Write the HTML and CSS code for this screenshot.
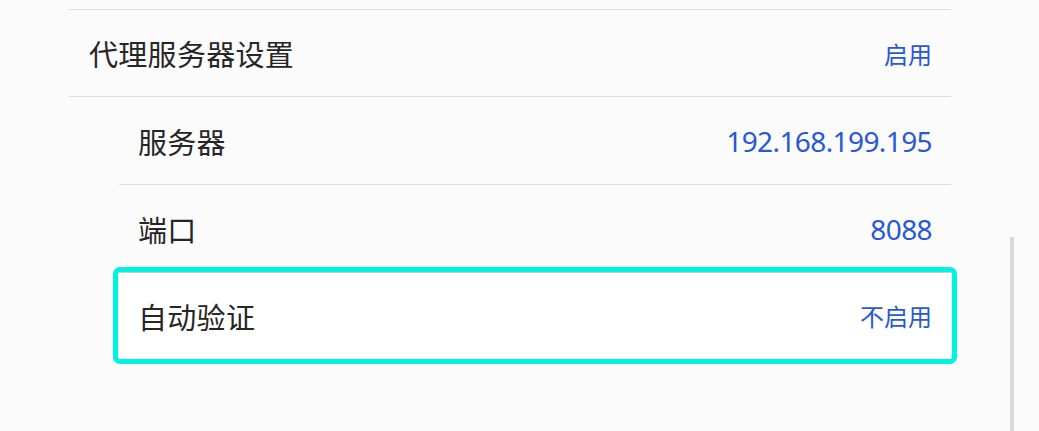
FILE: index.html
```html
<!DOCTYPE html>
<html lang="zh-CN">
<head>
  <meta charset="UTF-8">
  <title>代理服务器设置</title>
  <link rel="stylesheet" href="styles.css">
</head>
<body>

  <div class="settings">
    <div class="row header">
      <span class="label">代理服务器设置</span>
      <span class="value">启用</span>
    </div>

    <div class="sub-list">
      <div class="row">
        <span class="label">服务器</span>
        <span class="value num">192.168.199.195</span>
      </div>
      <div class="row">
        <span class="label">端口</span>
        <span class="value num">8088</span>
      </div>
      <div class="row focused">
        <span class="label">自动验证</span>
        <span class="value">不启用</span>
      </div>
    </div>
  </div>

  <div class="scrollbar"></div>

</body>
</html>
```

FILE: styles.css
```css
body {
  margin: 0;
  background: #fbfbfb;
  font-family: "Noto Sans", "Noto Sans CJK SC", sans-serif;
  color: #262626;
  height: 431px;
  overflow: hidden;
}

.settings {
  width: 882px;
  margin-left: 69px;
  padding-top: 9px;
}

.row {
  display: flex;
  align-items: center;
  justify-content: space-between;
  height: 87px;
  padding: 0 19px 0 19px;
  border-bottom: 1px solid #dcdcdc;
}

.header {
  height: 86px;
  padding-left: 20px;
  border-top: 1px solid #dcdcdc;
}

.label {
  font-family: "Noto Sans CJK SC", sans-serif;
  font-size: 29px;
  letter-spacing: 0.3px;
}

.value {
  font-family: "Noto Sans CJK SC", sans-serif;
  font-size: 24px;
  color: #2858d6;
}

.value.num {
  font-family: "Noto Sans", sans-serif;
  font-size: 28px;
  letter-spacing: -0.6px;
}

.sub-list {
  margin-left: 50px;
}

.focused {
  height: 85px;
  border-bottom: none;
  background: #fff;
  border-radius: 1px;
  outline: 5px solid #00f2e2;
  outline-offset: 1px;
  box-shadow: 0 0 8px rgba(0, 0, 0, 0.18);
}

.scrollbar {
  position: absolute;
  left: 1010px;
  top: 237px;
  width: 4px;
  height: 194px;
  background: #d8d8d8;
}
```
